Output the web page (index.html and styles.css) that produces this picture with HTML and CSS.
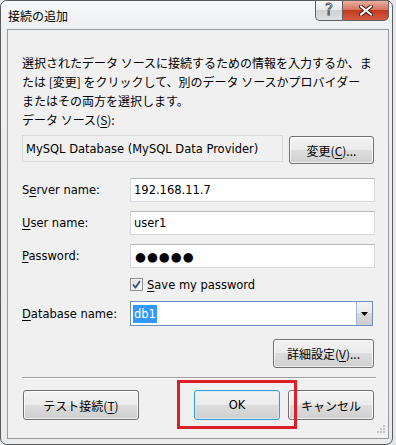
FILE: index.html
```html
<!DOCTYPE html>
<html lang="ja">

<head>
    <meta charset="UTF-8">
    <meta name="viewport" content="width=device-width, initial-scale=1.0">
    <title>接続の追加</title>
    <link rel="stylesheet" href="styles.css">
</head>

<body>
    <div class="window">
        <div class="titlebar">
            <span class="title">接続の追加</span>
            <div class="caption">
                <div class="cbtn help">?</div>
                <div class="cbtn close">
                    <svg width="14" height="11" viewBox="0 0 14 11">
                        <path d="M2,1.5 L12,9.5 M12,1.5 L2,9.5" stroke="#3a1a14" stroke-width="4" stroke-linecap="square"></path>
                        <path d="M2,1.5 L12,9.5 M12,1.5 L2,9.5" stroke="#ffffff" stroke-width="2" stroke-linecap="square"></path>
                    </svg>
                </div>
            </div>
        </div>

        <div class="client">
            <p class="desc">選択されたデータ ソースに接続するための情報を入力するか、ま<br>たは [変更] をクリックして、別のデータ ソースかプロバイダー<br>またはその両方を選択します。</p>
            <div class="label">データ ソース(<u>S</u>):</div>

            <div class="source-row">
                <div class="field readonly">MySQL Database (MySQL Data Provider)</div>
                <div class="btn change">変更(<u>C</u>)...</div>
            </div>

            <div class="form-row server">
                <span class="lbl">S<u>e</u>rver name:</span>
                <div class="field">192.168.11.7</div>
            </div>
            <div class="form-row">
                <span class="lbl"><u>U</u>ser name:</span>
                <div class="field">user1</div>
            </div>
            <div class="form-row">
                <span class="lbl"><u>P</u>assword:</span>
                <div class="field dots">●●●●●</div>
            </div>

            <div class="check-row">
                <span class="checkbox">
                    <svg width="9" height="9" viewBox="0 0 9 9">
                        <path d="M1,4.5 L3.5,7.5 L8,1" fill="none" stroke="#3b4f7a" stroke-width="1.8"></path>
                    </svg>
                </span>
                <span><u>S</u>ave my password</span>
            </div>

            <div class="form-row db">
                <span class="lbl"><u>D</u>atabase name:</span>
                <div class="combo">
                    <span class="combo-text"><span class="sel">db1</span></span>
                    <span class="drop">
                        <svg width="7" height="4" viewBox="0 0 7 4">
                            <path d="M0,0 L7,0 L3.5,4 Z" fill="#000"></path>
                        </svg>
                    </span>
                </div>
            </div>

            <div class="adv-row">
                <div class="btn adv">詳細設定(<u>V</u>)...</div>
            </div>

            <div class="sep"></div>

            <div class="btn-row">
                <div class="btn test">テスト接続(<u>T</u>)</div>
                <div class="btn ok">OK</div>
                <div class="btn cancel">キャンセル</div>
            </div>

            <!-- 注釈の赤枠 -->
            <div class="mark"></div>
            <svg class="grip" width="8" height="8" viewBox="0 0 8 8">
                <rect x="6" y="0" width="2" height="2" fill="#c4c4c4"></rect>
                <rect x="3" y="3" width="2" height="2" fill="#c4c4c4"></rect>
                <rect x="6" y="3" width="2" height="2" fill="#c4c4c4"></rect>
                <rect x="0" y="6" width="2" height="2" fill="#c4c4c4"></rect>
                <rect x="3" y="6" width="2" height="2" fill="#c4c4c4"></rect>
                <rect x="6" y="6" width="2" height="2" fill="#c4c4c4"></rect>
            </svg>
        </div>
    </div>
</body>

</html>
```

FILE: styles.css
```css
* {
    box-sizing: border-box;
}

body {
    margin: 0;
    background: #e4e6e9;
    font-family: "Noto Sans CJK JP", sans-serif;
    font-size: 12px;
    color: #000;
}

u {
    text-underline-offset: 2px;
}

.window {
    width: 393px;
    height: 445px;
    border: 1px solid #5a5a5a;
    border-radius: 7px;
    padding: 0 3px 5px 6px;
    background: linear-gradient(#f8f9fa, #eceef0 30px, #e9ebed);
    display: flex;
    flex-direction: column;
}

.titlebar {
    height: 28px;
    display: flex;
    justify-content: space-between;
    align-items: flex-start;
    flex-shrink: 0;
}

.title {
    padding: 6px 0 0 1px;
    line-height: 18px;
}

.caption {
    display: flex;
    margin-top: -1px;
}

.cbtn {
    height: 21px;
    border: 1px solid #616161;
    display: flex;
    align-items: center;
    justify-content: center;
}

.help {
    width: 27px;
    border-right: none;
    border-radius: 0 0 0 5px;
    background: linear-gradient(#f8f8f8, #e6e7e9 50%, #cfd2d6 50%, #dcdee1);
    color: #f6f6f6;
    font-family: "DejaVu Sans", sans-serif;
    font-size: 15px;
    line-height: 15px;
    -webkit-text-stroke: 0.8px #454545;
}

.close {
    width: 47px;
    border-radius: 0 0 5px 0;
    background: linear-gradient(#eab0a3, #d9745f 45%, #c23a22 50%, #d65c42);
}

.client {
    position: relative;
    flex: 1;
    border: 1px solid #9a9a9a;
    background: #f0f0f0;
    padding: 23px 13px 0 14px;
    font-family: "DejaVu Sans", "Noto Sans CJK JP", sans-serif;
    font-size: 11.5px;
}

.desc {
    margin: 0;
    line-height: 19px;
    white-space: nowrap;
    font-family: "Noto Sans CJK JP", sans-serif;
    font-size: 12px;
}

.label {
    line-height: 19px;
    font-family: "Noto Sans CJK JP", sans-serif;
    font-size: 12px;
}

.source-row {
    display: flex;
    align-items: flex-start;
    margin-top: 6px;
    height: 29px;
}

.field {
    height: 24px;
    background: #fff;
    border: 1px solid #d5dae0;
    border-top-color: #b5b9c0;
    padding-left: 3px;
    display: flex;
    align-items: center;
    flex: 1;
}

.field.readonly {
    flex: none;
    width: 261px;
    height: 27px;
    background: #f0f0f0;
    border-color: #dadada;
    padding-left: 3px;
}

.btn {
    height: 29px;
    border: 1px solid #707070;
    border-radius: 3px;
    background: linear-gradient(#f2f2f2, #ebebeb 50%, #dddddd 50%, #cfcfcf);
    box-shadow: inset 0 0 0 1px rgba(255, 255, 255, 0.75);
    display: flex;
    align-items: center;
    justify-content: center;
    font-family: "Noto Sans CJK JP", sans-serif;
    font-size: 12px;
}

.change {
    width: 85px;
    margin: 1px 1px 0 auto;
    height: 28px;
}

.form-row {
    display: flex;
    align-items: center;
    height: 24px;
    margin-top: 9px;
}

.form-row.server {
    margin-top: 14px;
}

.lbl {
    width: 108px;
    flex-shrink: 0;
}

.dots {
    padding-left: 4px;
    font-size: 12.5px;
    letter-spacing: 1px;
}

.check-row {
    display: flex;
    align-items: center;
    height: 15px;
    margin: 9px 0 0 108px;
}

.checkbox {
    width: 13px;
    height: 13px;
    border: 1px solid #8e8f8f;
    background: linear-gradient(135deg, #dcdcdc, #fbfbfb);
    box-shadow: inset 0 0 0 1px #f4f4f4;
    display: flex;
    align-items: center;
    justify-content: center;
    margin-right: 4px;
}

.form-row.db {
    height: 25px;
}

.combo {
    flex: 1;
    height: 25px;
    margin-right: 2px;
    border: 1px solid #6c8fbd;
    background: #fff;
    display: flex;
}

.combo-text {
    flex: 1;
    display: flex;
    align-items: center;
    padding-left: 2px;
}

.sel {
    background: #3399ff;
    color: #fff;
    line-height: 18px;
    padding: 0 1px;
}

.drop {
    width: 16px;
    border-left: 1px solid #9fb7d6;
    background: linear-gradient(#f3f3f3, #e9e9e9 50%, #dadada 50%, #cdcdcd);
    display: flex;
    align-items: center;
    justify-content: center;
}

.adv-row {
    display: flex;
    justify-content: flex-end;
    margin-top: 13px;
}

.adv {
    width: 101px;
    margin-right: 1px;
}

.sep {
    margin: 9px -1px 0 0;
    height: 2px;
    border-top: 1px solid #a0a0a0;
    border-bottom: 1px solid #fff;
}

.btn-row {
    display: flex;
    margin-top: 11px;
}

.btn-row .btn {
    height: 30px;
}

.test {
    width: 116px;
    margin-left: 1px;
}

.ok {
    width: 86px;
    margin-left: auto;
    border-color: #3c9ad0;
    box-shadow: inset 0 0 0 1px rgba(210, 235, 250, 0.9);
    font-family: "DejaVu Sans", sans-serif;
    font-size: 11.5px;
}

.cancel {
    width: 86px;
    margin: 0 1px 0 8px;
}

.mark {
    position: absolute;
    left: 169px;
    top: 350px;
    width: 120px;
    height: 49px;
    border: 3px solid #dc1f2b;
}

.grip {
    position: absolute;
    right: 3px;
    bottom: 5px;
}
```
